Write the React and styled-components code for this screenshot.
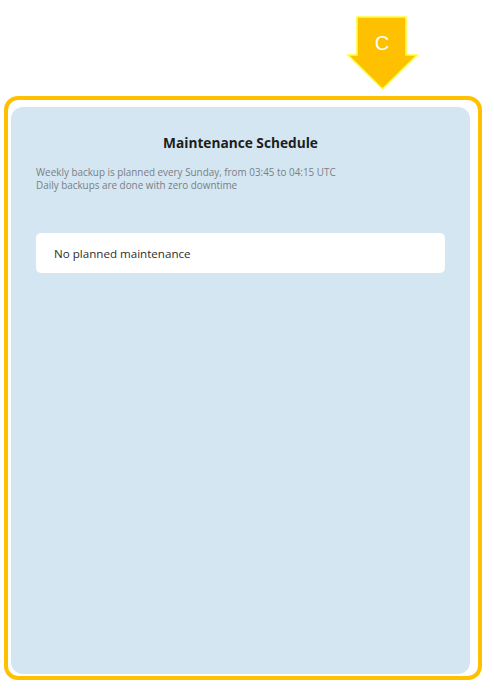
import React from 'react'
import styled, { createGlobalStyle } from 'styled-components'

const GlobalStyle = createGlobalStyle`
  html, body {
    margin: 0;
    padding: 0;
    background: #ffffff;
  }
  body {
    font-family: "Open Sans", "Noto Sans", sans-serif;
  }
`

const Page = styled.div`
  width: 494px;
  height: 691px;
  display: flex;
  flex-direction: column;
  box-sizing: border-box;
  padding-top: 16px;
`

const MarkerRow = styled.div`
  display: flex;
  padding-left: 346px;
  height: 75px;
`

const Frame = styled.div`
  margin: 5px 0 0 4px;
  width: 478px;
  height: 584px;
  box-sizing: border-box;
  border: 4px solid #ffc000;
  border-radius: 14px;
  padding: 7px 8px 2px 3px;
  display: flex;
`

const Panel = styled.section`
  flex: 1;
  background: #d4e6f1;
  border-radius: 12px;
  padding: 27px 25px 0 25px;
  display: flex;
  flex-direction: column;
`

const Title = styled.h2`
  margin: 0;
  text-align: center;
  font-size: 13.7px;
  font-weight: 700;
  color: #1d1d1d;
  line-height: 18px;
`

const Notes = styled.div`
  margin-top: 14px;
  font-size: 9.9px;
  line-height: 13px;
  color: #7a7f84;
`

const Card = styled.div`
  margin-top: 41px;
  height: 40px;
  background: #ffffff;
  border-radius: 5px;
  display: flex;
  align-items: center;
  padding-left: 18px;
  font-size: 11.6px;
  color: #2e2e2e;
`

function Marker() {
  return (
    <svg width="74" height="75" viewBox="0 0 74 75">
      <polygon
        points="11,1 60,1 60,39 71,39 36.5,73 2,39 11,39"
        fill="#ffc000"
        stroke="#ffff33"
        strokeWidth="1.5"
      />
      <text
        x="36"
        y="34"
        textAnchor="middle"
        fill="#ffffff"
        fontFamily="Liberation Sans, Arial, sans-serif"
        fontSize="20"
      >
        C
      </text>
    </svg>
  )
}

export default function App() {
  return (
    <>
      <GlobalStyle />
      <Page>
        <MarkerRow>
          <Marker />
        </MarkerRow>
        <Frame>
          <Panel>
            <Title>Maintenance Schedule</Title>
            <Notes>
              Weekly backup is planned every Sunday, from 03:45 to 04:15 UTC
              <br />
              Daily backups are done with zero downtime
            </Notes>
            <Card>No planned maintenance</Card>
          </Panel>
        </Frame>
      </Page>
    </>
  )
}
